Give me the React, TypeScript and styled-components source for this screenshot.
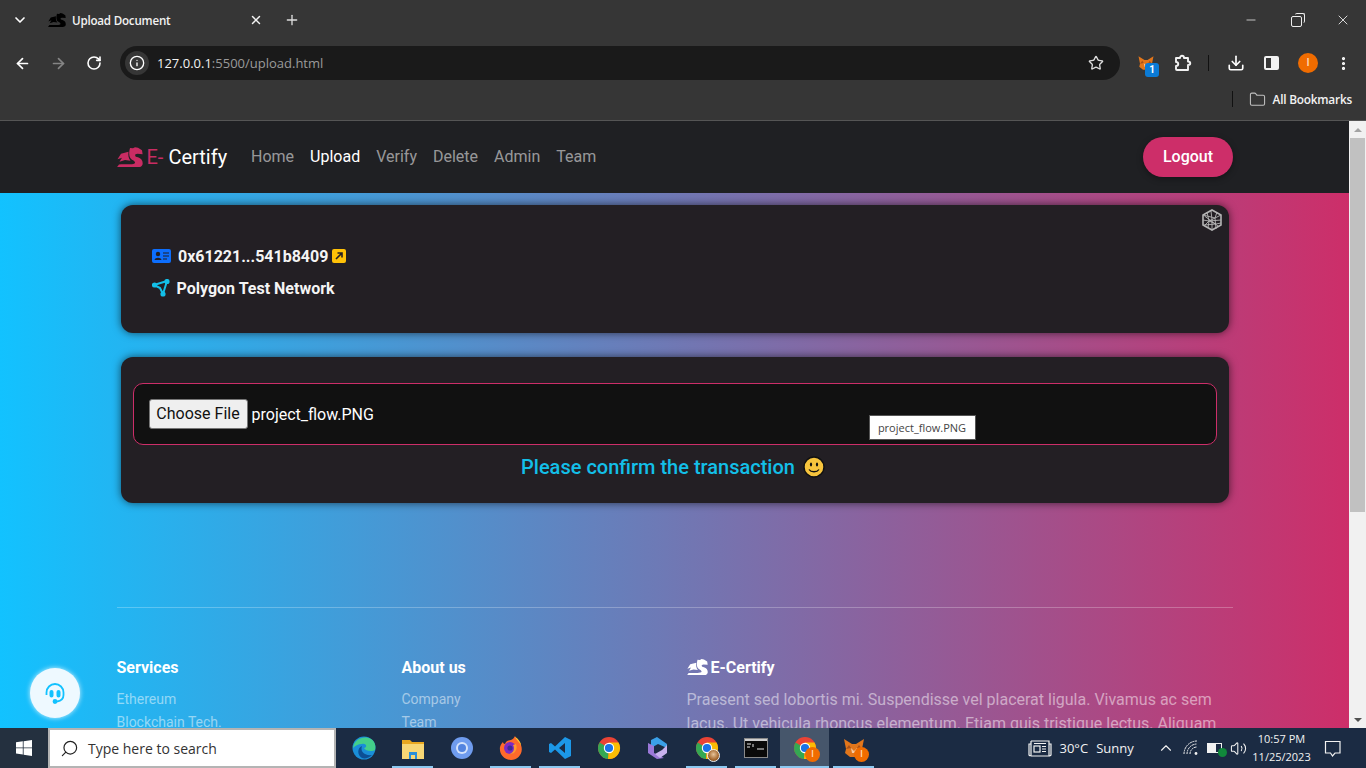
import React from "react";
import styled, { createGlobalStyle } from "styled-components";
import {
  ArrowLeft,
  ArrowRight,
  ChevronDown,
  ChevronUp,
  Download,
  EllipsisVertical,
  Folder,
  Info,
  Minus,
  Plus,
  RotateCw,
  Search,
  Star,
  Volume2,
  X,
} from "lucide-react";

const GlobalStyle = createGlobalStyle`
  html, body {
    margin: 0;
    padding: 0;
    height: 100%;
    overflow: hidden;
    background: #363636;
    font-family: "Roboto", "Liberation Sans", sans-serif;
  }
  * { box-sizing: border-box; }
`;

const Screen = styled.div`
  display: flex;
  flex-direction: column;
  width: 1366px;
  height: 768px;
  overflow: hidden;
  position: relative;
`;

/* browser chrome */
const Chrome = styled.div`
  flex: 0 0 121px;
  display: flex;
  flex-direction: column;
  background: #363636;
  border-bottom: 1px solid #555;
  color: #fff;
  font-family: "Open Sans", "Liberation Sans", sans-serif;
`;

const TabStrip = styled.div`
  flex: 0 0 40px;
  display: flex;
  align-items: center;
  padding-left: 12px;
`;

const TabTitle = styled.div`
  display: flex;
  align-items: center;
  width: 215px;
  margin-left: 20px;
  font-size: 11.6px;
  font-weight: 600;
  letter-spacing: -0.2px;
  gap: 6px;
  color: #f2f2f2;
`;

const TabClose = styled.div`
  margin-left: auto;
  display: flex;
`;

const NewTab = styled.div`
  display: flex;
  margin-left: 21px;
`;

const WindowButtons = styled.div`
  margin-left: auto;
  display: flex;
  align-items: center;
  gap: 33px;
  padding-right: 15px;
`;

const Restore = styled.div`
  position: relative;
  width: 11px;
  height: 11px;
  border: 1px solid #eee;
  border-radius: 2px;
  margin-top: 2px;
  &::before {
    content: "";
    position: absolute;
    top: -4px;
    right: -4px;
    width: 9px;
    height: 9px;
    border-top: 1px solid #eee;
    border-right: 1px solid #eee;
    border-radius: 2px;
  }
`;

const Toolbar = styled.div`
  flex: 0 0 44px;
  display: flex;
  align-items: center;
  padding: 2px 0 0 14px;
`;

const NavIcons = styled.div`
  display: flex;
  align-items: center;
  gap: 19px;
`;

const Omnibox = styled.div`
  width: 1000px;
  height: 34px;
  margin-left: 18px;
  display: flex;
  align-items: center;
  padding: 0 16px 0 5px;
  background: #1a1a1a;
  border-radius: 17px;
  font-size: 13px;
`;

const SiteInfo = styled.div`
  width: 24px;
  height: 24px;
  border-radius: 50%;
  background: #363636;
  display: flex;
  align-items: center;
  justify-content: center;
  margin-right: 8px;
`;

const HostPart = styled.span`
  color: #f2f2f2;
`;

const PathPart = styled.span`
  color: #9a9a9a;
`;

const StarSlot = styled.div`
  margin-left: auto;
  display: flex;
`;

const ExtensionIcons = styled.div`
  display: flex;
  align-items: center;
  margin-left: 17px;
`;

const FoxSlot = styled.div`
  position: relative;
  display: flex;
  width: 22px;
  margin-right: 15px;
`;

const ExtBadge = styled.div`
  position: absolute;
  left: 8px;
  top: 9px;
  width: 14px;
  height: 14px;
  border-radius: 3px;
  background: #0b7bd6;
  color: #fff;
  font: 700 10px/14px "Roboto", sans-serif;
  text-align: center;
`;

const ToolbarDivider = styled.div`
  width: 1px;
  height: 16px;
  background: #111;
  margin: 0 18px 0 16px;
`;

const SidePanelIcon = styled.div`
  width: 15px;
  height: 14px;
  margin: 0 19px 0 19px;
  border: 2px solid #f2f2f2;
  border-radius: 2px;
  background: linear-gradient(to right, transparent 50%, #f2f2f2 50%);
`;

const Avatar = styled.div`
  width: 20px;
  height: 20px;
  border-radius: 50%;
  background: #f06c00;
  color: #ffd9b8;
  font: 500 11px/20px "Roboto", sans-serif;
  text-align: center;
  margin-right: 17px;
`;

const BookmarksBar = styled.div`
  flex: 1;
  display: flex;
  align-items: center;
  justify-content: flex-end;
  padding: 0 14px 6px 0;
  font-size: 11.8px;
  font-weight: 600;
  letter-spacing: -0.2px;
  color: #f2f2f2;
`;

const BookmarksDivider = styled.div`
  width: 1px;
  height: 16px;
  background: #111;
  margin-right: 16px;
`;

const BookmarksFolder = styled.div`
  display: flex;
  margin-right: 7px;
  color: #c0c0c0;
`;

/* page */
const Viewport = styled.div`
  flex: 1;
  display: flex;
  min-height: 0;
`;

const Page = styled.div`
  flex: 1;
  min-width: 0;
  overflow: hidden;
  background: linear-gradient(to right, #12c2ff 0%, #cd2e69 100%);
`;

const NavBar = styled.div`
  height: 72px;
  background: #1f2023;
  padding: 0 116px 0 116.5px;
  display: flex;
  align-items: center;
`;

const Brand = styled.div`
  display: flex;
  align-items: center;
  width: 126.5px;
  font-size: 20px;
  color: #fff;
`;

const BrandAccent = styled.span`
  color: #c92c63;
  margin: 0 5px 0 4px;
`;

const NavLinks = styled.div`
  display: flex;
  gap: 16px;
  margin: 0 0 2px 8px;
`;

const NavLink = styled.span<{ $active?: boolean }>`
  font-size: 16px;
  color: ${(p) => (p.$active ? "#fff" : "rgba(255,255,255,0.55)")};
`;

const LogoutButton = styled.div`
  margin-left: auto;
  width: 90px;
  height: 40px;
  border-radius: 20px;
  background: #cd2e69;
  color: #fff;
  font-size: 16px;
  font-weight: 500;
  line-height: 40px;
  text-align: center;
  box-shadow: 0 2px 6px rgba(0, 0, 0, 0.35);
`;

const Main = styled.div`
  width: 1108px;
  margin: 12px 0 0 120.5px;
  display: flex;
  flex-direction: column;
  gap: 24px;
`;

const Card = styled.div`
  position: relative;
  background: #231f24;
  border-radius: 12px;
  box-shadow: 0 0 8px rgba(0, 0, 0, 0.6);
`;

const WalletCard = styled(Card)`
  height: 128px;
  padding: 39px 31px 0;
  color: #f4f4f4;
  font-size: 16px;
  font-weight: 700;
`;

const WalletRow = styled.div`
  display: flex;
  align-items: center;
  height: 24px;
  margin-bottom: 8px;
`;

const RowIcon = styled.div`
  display: flex;
  width: 26.5px;
`;

const NetworkIcon = styled(RowIcon)`
  width: 25px;
`;

const CubeBadge = styled.div`
  position: absolute;
  top: 4px;
  right: 6px;
  display: flex;
`;

const OpenLink = styled.div`
  display: flex;
  margin-left: 4px;
`;

const UploadCard = styled(Card)`
  height: 146px;
  padding: 26px 12px 0;
`;

const FileField = styled.div`
  position: relative;
  height: 62px;
  display: flex;
  align-items: center;
  padding-left: 15px;
  background: #111;
  border: 1px solid #cd2e69;
  border-radius: 10px;
  color: #fff;
  font-size: 16px;
`;

const ChooseButton = styled.div`
  width: 99px;
  height: 30px;
  margin-right: 4px;
  background: #efefef;
  border: 1px solid #767676;
  border-radius: 3px;
  color: #111;
  line-height: 28px;
  text-align: center;
`;

const FileTip = styled.div`
  position: absolute;
  left: 735px;
  top: 31px;
  width: 107px;
  height: 25px;
  background: #fff;
  border: 1px solid #555;
  color: #444;
  font: 11px/23px "Open Sans", sans-serif;
  text-align: center;
`;

const StatusLine = styled.div`
  display: flex;
  align-items: center;
  justify-content: center;
  gap: 8px;
  height: 44px;
  padding-right: 3px;
  color: #13bfe8;
  font-size: 20px;
  font-weight: 500;
`;

const Footer = styled.div`
  width: 1116px;
  margin: 104px 0 0 116.5px;
  border-top: 1px solid rgba(255, 255, 255, 0.25);
  padding-top: 49px;
  display: grid;
  grid-template-columns: 285px 285px 546px;
`;

const FooterHeading = styled.div`
  display: flex;
  align-items: center;
  gap: 3px;
  height: 20px;
  margin-bottom: 11px;
  color: #fff;
  font-size: 16px;
  font-weight: 700;
`;

const FooterLink = styled.div`
  height: 23px;
  line-height: 23px;
  font-size: 14px;
  color: rgba(255, 255, 255, 0.5);
`;

const FooterText = styled.div`
  font-size: 16px;
  line-height: 24px;
  color: rgba(255, 255, 255, 0.5);
`;

const HelpBubble = styled.div`
  position: absolute;
  left: 30px;
  top: 668px;
  width: 50px;
  height: 50px;
  border-radius: 50%;
  background: #eef9ff;
  box-shadow: 0 0 5px rgba(255, 255, 255, 0.8);
  color: #12c2ff;
  display: flex;
  align-items: center;
  justify-content: center;
`;

const Scrollbar = styled.div`
  flex: 0 0 17px;
  display: flex;
  flex-direction: column;
  background: #f1f1f1;
`;

const ScrollArrow = styled.div<{ $down?: boolean }>`
  flex: 0 0 17px;
  display: flex;
  align-items: center;
  justify-content: center;
  &::before {
    content: "";
    border-left: 4px solid transparent;
    border-right: 4px solid transparent;
    ${(p) => (p.$down ? "border-top: 4px solid #505050;" : "border-bottom: 4px solid #a3a3a3;")}
  }
`;

const ScrollThumb = styled.div`
  height: 374px;
  background: #c1c1c1;
  margin: 0 1px;
`;

const ScrollSpace = styled.div`
  flex: 1;
`;

/* windows taskbar */
const Taskbar = styled.div`
  flex: 0 0 40px;
  display: flex;
  align-items: stretch;
  background: #1b2b43;
  color: #f2f2f2;
  font-family: "Open Sans", "Liberation Sans", sans-serif;
`;

const StartButton = styled.div`
  width: 48px;
  display: flex;
  align-items: center;
  justify-content: center;
  background: #24303f;
`;

const SearchBox = styled.div`
  width: 288px;
  display: flex;
  align-items: center;
  gap: 9px;
  padding-left: 10px;
  background: #fff;
  border: 2px solid #b4b4b4;
  color: #333;
  font-size: 14px;
`;

const SearchGlass = styled.div`
  display: flex;
  color: #222;
  transform: scaleX(-1);
`;

const Tiles = styled.div`
  display: flex;
  margin-left: 3px;
`;

const Tile = styled.div<{ $open?: boolean; $active?: boolean }>`
  position: relative;
  width: 49px;
  display: flex;
  align-items: center;
  justify-content: center;
  background: ${(p) => (p.$active ? "#46566b" : "transparent")};
  &::after {
    content: "";
    position: absolute;
    bottom: 0;
    left: ${(p) => (p.$active ? "0" : "4px")};
    right: ${(p) => (p.$active ? "0" : "4px")};
    height: 2px;
    background: ${(p) => (p.$open ? "#8cc8f0" : "transparent")};
  }
`;

const TileBadge = styled.div`
  position: absolute;
  right: 9px;
  bottom: 6px;
  width: 15px;
  height: 15px;
  border-radius: 50%;
  background: #f06c00;
  color: #ffd9b8;
  font: 500 9px/15px "Roboto", sans-serif;
  text-align: center;
`;

const PetBadge = styled.div`
  position: absolute;
  right: 11px;
  bottom: 6px;
  width: 13px;
  height: 13px;
  border-radius: 50%;
  background: radial-gradient(circle at 50% 40%, #e8c49a 0%, #a5682f 60%, #5a3517 100%);
  border: 1px solid #eee;
`;

const Tray = styled.div`
  margin-left: auto;
  display: flex;
  align-items: center;
  font-size: 13px;
`;

const Weather = styled.div`
  display: flex;
  align-items: center;
  width: 129px;
  gap: 8px;
  white-space: nowrap;
`;

const TrayIcons = styled.div`
  display: flex;
  align-items: center;
  gap: 8px;
`;

const BatteryIcon = styled.div`
  position: relative;
  width: 15px;
  height: 10px;
  border: 1px solid #f2f2f2;
  background: linear-gradient(to right, #f2f2f2 60%, transparent 60%);
  &::after {
    content: "";
    position: absolute;
    right: -6px;
    bottom: -5px;
    width: 9px;
    height: 9px;
    border-radius: 50%;
    background: #11893b;
  }
`;

const Clock = styled.div`
  width: 70px;
  text-align: center;
  font-size: 11px;
  line-height: 18px;
`;

const NotifySlot = styled.div`
  display: flex;
  margin: 0 24px 0 6.5px;
`;

function Dragon({ size = 26, color = "currentColor" }: { size?: number; color?: string }) {
  return (
    <svg width={size} height={size * 0.78} viewBox="0 0 26 20" fill={color}>
      <path d="M13 0.8 L16 1.2 L18 0 L21 0.6 L25 3 L25.6 7 L20.5 6.6 L18.5 7.2 C17.5 9 19 10 21 10 C24 11 25.7 13 25.7 16 C25.7 18.5 24 20 21 20 L0 20 L2 17.3 C8 16.8 15 17.8 17.5 16.3 C19 15 17 13.5 15 12.5 C12 11 11.5 6 13 0.8Z" />
      <path d="M11.5 4.5 L4 6.5 L0.5 12 L5 10.5 L2.5 14.5 L8 12.8 L13.5 13.5 C11.5 11 11 8 11.5 4.5Z" />
    </svg>
  );
}

function Fox({ size = 22 }: { size?: number }) {
  return (
    <svg width={size} height={size} viewBox="0 0 24 24">
      <path d="M2 3 L10 8 H14 L22 3 L20 13 L21 17 L16 21 H8 L3 17 L4 13Z" fill="#e2761b" />
      <path d="M9 12 L12 15 L15 12 L14 17 H10Z" fill="#f6c9a0" />
      <path d="M4 13 L9 12 L7 9Z M20 13 L15 12 L17 9Z" fill="#a8511a" />
    </svg>
  );
}

function ExtensionPiece() {
  return (
    <svg width={18} height={18} viewBox="0 0 18 18" fill="none" stroke="#f2f2f2" strokeWidth="1.9" strokeLinejoin="round">
      <path d="M2 4 H6 C6 1 10 1 10 4 H14 V7.5 C17 7.5 17 11 14 11 V16 H3 C2.5 16 2 15.5 2 15 V12 C5 12 5 8 2 8Z" />
    </svg>
  );
}

function ChromeLogo({ size = 24 }: { size?: number }) {
  return (
    <svg width={size} height={size} viewBox="0 0 24 24">
      <circle cx="12" cy="12" r="11" fill="#ea4335" />
      <path d="M12 12 L2.5 6.5 A11 11 0 0 0 11 23 Z" fill="#34a853" />
      <path d="M12 12 L11 23 A11 11 0 0 0 21.5 6.5 L12 6.5 Z" fill="#fbbc04" />
      <circle cx="12" cy="12" r="5.2" fill="#fff" />
      <circle cx="12" cy="12" r="4.1" fill="#1a73e8" />
    </svg>
  );
}

function EdgeLogo() {
  return (
    <svg width={24} height={24} viewBox="0 0 24 24">
      <circle cx="12" cy="12" r="11.5" fill="#1a8ed8" />
      <path d="M1 12 C2 3 12 -1 19 3 C23 5 24 10 23 14 C20 16 13 15 12 12 C16 11 14 7 10 8 C6 8 3 10 1 12Z" fill="#43cf8a" />
      <path d="M10 22 C5 19 5 12 10 10 C8 15 12 20 20 19 C17 22 13 23 10 22Z" fill="#0c4f95" />
    </svg>
  );
}

function ExplorerLogo() {
  return (
    <svg width={24} height={22} viewBox="0 0 24 22">
      <path d="M1 3 H9 L11 5 H23 V9 H1Z" fill="#e9a820" />
      <rect x="1" y="7" width="22" height="15" fill="#f8d775" />
      <rect x="8" y="15" width="8" height="7" fill="#2a8fd8" />
      <rect x="10" y="18" width="4" height="4" fill="#f8d775" />
    </svg>
  );
}

function ChromiumLogo() {
  return (
    <svg width={22} height={22} viewBox="0 0 22 22">
      <circle cx="11" cy="11" r="11" fill="#6f9cef" />
      <circle cx="11" cy="11" r="6" fill="#d5e3fb" />
      <circle cx="11" cy="11" r="4" fill="#5384e0" />
    </svg>
  );
}

function FirefoxLogo() {
  return (
    <svg width={24} height={24} viewBox="0 0 24 24">
      <path d="M16 0 C17 3 21 5 22 9 C25 17 19 24 12 24 C5 24 0 18 1 11 C2 8 3 7 4 6 C4 7 5 8 6 8 C7 5 10 4 12 4 C14 3 15 2 16 0Z" fill="#ff6a2b" />
      <path d="M16 1 C17 4 21 6 22 10 C22 7 20 3 16 1Z" fill="#ffc92b" />
      <circle cx="11" cy="12" r="6" fill="#7d2bc4" />
      <circle cx="11" cy="12" r="2.6" fill="#3d2a96" />
      <path d="M17 8 C19 13 16 19 10 18 C15 17 16 12 14 9Z" fill="#ff9a2e" />
    </svg>
  );
}

function VsCodeLogo() {
  return (
    <svg width={24} height={24} viewBox="0 0 24 24">
      <path d="M17 1 L23 4 V20 L17 23 L7 13.5 L3 17 L1 16 V8 L3 7 L7 10.5Z M17 7 L11 12 L17 17Z" fill="#1c98e8" fillRule="evenodd" />
    </svg>
  );
}

function CopilotLogo() {
  return (
    <svg width={22} height={24} viewBox="0 0 22 24">
      <path d="M4 4 L10 1 L20 8 V12 L11 8 L4 12Z" fill="#3aa0e8" />
      <path d="M1 7 L7 10 V17 L17 22 L10 23 L1 17Z" fill="#9a78d8" />
      <path d="M20 9 V17 L13 22 L8 18 L15 14Z" fill="#c8b2ee" />
    </svg>
  );
}

function TerminalLogo() {
  return (
    <svg width={24} height={20} viewBox="0 0 24 20">
      <rect x="0.5" y="0.5" width="23" height="19" fill="#0a0a0a" stroke="#8a8a8a" />
      <rect x="1" y="1" width="22" height="2" fill="#d0d0d0" />
      <path d="M3 6 H7 M3 9 H6 M9 6 V9 M13 11 H20" stroke="#e8e8e8" strokeWidth="1" />
    </svg>
  );
}

function PolygonMark() {
  return (
    <svg width={18} height={18} viewBox="0 0 18 18" fill="none" stroke="#13bfe8" strokeWidth="2" strokeLinejoin="round">
      <path d="M2 6 L15 2 L11 15 L8 9Z" />
      <circle cx="2.5" cy="6" r="1.6" fill="#13bfe8" />
      <circle cx="15" cy="2.5" r="1.6" fill="#13bfe8" />
      <circle cx="11" cy="15" r="1.6" fill="#13bfe8" />
    </svg>
  );
}

function IdCard() {
  return (
    <svg width={19} height={14} viewBox="0 0 19 14">
      <rect width="19" height="14" rx="2" fill="#0d6efd" />
      <circle cx="6" cy="5" r="2.2" fill="#231f24" />
      <path d="M2.5 11 C3 8 9 8 9.5 11Z" fill="#231f24" />
      <path d="M11 4 H17 M11 7 H17 M11 10 H15" stroke="#231f24" strokeWidth="1.2" />
    </svg>
  );
}

function OpenArrow() {
  return (
    <svg width={14} height={14} viewBox="0 0 14 14">
      <rect width="14" height="14" rx="2" fill="#ffc107" />
      <path d="M4 10 L10 4 M5.5 4 H10 V8.5" stroke="#231f24" strokeWidth="1.6" fill="none" />
    </svg>
  );
}

function WireCube() {
  return (
    <svg width={22} height={22} viewBox="0 0 22 22" fill="none" stroke="#b5b5b5" strokeWidth="0.9">
      <path d="M11 1 L20 6 V16 L11 21 L2 16 V6Z" strokeWidth="1.6" />
      <path d="M2 6 L14 9 L20 6 M14 9 L15 20 M6 3 L8 12 L7 19 M2 11 L8 12 L20 11 M4 16 L8 12 L15 15 L20 14 M3 16 L15 15 M16 3 L14 9 L8 12 M10 2 L11 10.5 L11 20 M3.5 7 L17 17" />
    </svg>
  );
}

function Smiley() {
  return (
    <svg width={22} height={22} viewBox="0 0 22 22">
      <circle cx="11" cy="11" r="10" fill="#f7c43d" stroke="#111" strokeWidth="1.4" />
      <ellipse cx="8" cy="8.5" rx="1.1" ry="2" fill="#111" />
      <ellipse cx="14" cy="8.5" rx="1.1" ry="2" fill="#111" />
      <path d="M6 13.5 C8 16.5 14 16.5 16 13.5" fill="none" stroke="#111" strokeWidth="1.3" />
    </svg>
  );
}

function Headset() {
  return (
    <svg width={22} height={22} viewBox="0 0 22 22" fill="none" stroke="currentColor" strokeWidth="1.8">
      <path d="M2.5 13 V10.5 A8.5 8.5 0 0 1 19.5 10.5 V13 C19.5 17 16.5 19 13 19.5" />
      <rect x="6.4" y="9" width="2.2" height="5.5" rx="1.1" fill="currentColor" />
      <rect x="13.4" y="9" width="2.2" height="5.5" rx="1.1" fill="currentColor" />
      <circle cx="11" cy="19.5" r="1.5" fill="currentColor" />
    </svg>
  );
}

function WindowsLogo() {
  return (
    <svg width={16} height={16} viewBox="0 0 16 16" fill="#fff">
      <path d="M0 2.3 L6.8 1.3 V7.5 H0Z M7.6 1.2 L16 0 V7.5 H7.6Z M0 8.3 H6.8 V14.6 L0 13.6Z M7.6 8.3 H16 V16 L7.6 14.8Z" />
    </svg>
  );
}

function NewsIcon() {
  return (
    <svg width={24} height={17} viewBox="0 0 24 17" fill="none" stroke="#f2f2f2" strokeWidth="1.2">
      <path d="M3 1 H21 V15 C21 16 22 16 23 15 V4 H21 M3 1 V15 C3 16 2 16 1 15 V4 H3 M3 16 H22" />
      <rect x="6" y="6" width="6" height="6" />
      <path d="M6 3.5 H18 M14 6.5 H18 M14 9 H18 M14 11.5 H18" />
    </svg>
  );
}

function WifiBars() {
  return (
    <svg width={16} height={16} viewBox="0 0 16 16" fill="none" stroke="#f2f2f2" strokeWidth="1">
      <path d="M1 14 A13 13 0 0 1 14 1 M4 14 A10 10 0 0 1 14 4 M7 14 A7 7 0 0 1 14 7" strokeDasharray="2 0.6" />
      <circle cx="13" cy="13.5" r="1.4" fill="#f2f2f2" stroke="none" />
    </svg>
  );
}

function NotifyBubble() {
  return (
    <svg width={19} height={19} viewBox="0 0 19 19" fill="none" stroke="#f2f2f2" strokeWidth="1.2">
      <path d="M2.5 2.5 H17 V14 H12 L9.5 17 L7.5 14 H2.5Z" />
    </svg>
  );
}

const tiles = [
  { key: "edge", icon: <EdgeLogo />, open: false },
  { key: "explorer", icon: <ExplorerLogo />, open: true },
  { key: "chromium", icon: <ChromiumLogo />, open: false },
  { key: "firefox", icon: <FirefoxLogo />, open: true },
  { key: "vscode", icon: <VsCodeLogo />, open: true },
  { key: "chrome", icon: <ChromeLogo />, open: false },
  { key: "copilot", icon: <CopilotLogo />, open: false },
  { key: "chrome2", icon: <ChromeLogo />, open: true, pet: true },
  { key: "terminal", icon: <TerminalLogo />, open: true },
  { key: "chrome3", icon: <ChromeLogo />, open: true, active: true, badge: true },
  { key: "fox", icon: <Fox size={24} />, open: true, badge: true },
];

const navItems = ["Home", "Upload", "Verify", "Delete", "Admin", "Team"];

export default function App() {
  return (
    <Screen>
      <GlobalStyle />
      <Chrome>
        <TabStrip>
          <ChevronDown size={16} strokeWidth={2.5} />
          <TabTitle>
            <Dragon size={18} color="#000" />
            Upload Document
            <TabClose>
              <X size={14} strokeWidth={2.5} />
            </TabClose>
          </TabTitle>
          <NewTab>
            <Plus size={16} strokeWidth={2} color="#ddd" />
          </NewTab>
          <WindowButtons>
            <Minus size={14} strokeWidth={1.2} />
            <Restore />
            <X size={16} strokeWidth={1.2} />
          </WindowButtons>
        </TabStrip>
        <Toolbar>
          <NavIcons>
            <ArrowLeft size={17} strokeWidth={2.4} />
            <ArrowRight size={17} strokeWidth={2.4} color="#858585" />
            <RotateCw size={16} strokeWidth={2.4} />
          </NavIcons>
          <Omnibox>
            <SiteInfo>
              <Info size={16} strokeWidth={2} />
            </SiteInfo>
            <HostPart>127.0.0.1</HostPart>
            <PathPart>:5500/upload.html</PathPart>
            <StarSlot>
              <Star size={16} strokeWidth={2} color="#ddd" />
            </StarSlot>
          </Omnibox>
          <ExtensionIcons>
            <FoxSlot>
              <Fox size={18} />
              <ExtBadge>1</ExtBadge>
            </FoxSlot>
            <ExtensionPiece />
            <ToolbarDivider />
            <Download size={18} strokeWidth={2.2} />
            <SidePanelIcon />
            <Avatar>I</Avatar>
            <EllipsisVertical size={17} strokeWidth={2.5} />
          </ExtensionIcons>
        </Toolbar>
        <BookmarksBar>
          <BookmarksDivider />
          <BookmarksFolder>
            <Folder size={17} strokeWidth={1.5} />
          </BookmarksFolder>
          All Bookmarks
        </BookmarksBar>
      </Chrome>

      <Viewport>
        <Page>
          <NavBar>
            <Brand>
              <Dragon color="#c92c63" />
              <BrandAccent>E-</BrandAccent>
              Certify
            </Brand>
            <NavLinks>
              {navItems.map((item) => (
                <NavLink key={item} $active={item === "Upload"}>
                  {item}
                </NavLink>
              ))}
            </NavLinks>
            <LogoutButton>Logout</LogoutButton>
          </NavBar>

          <Main>
            <WalletCard>
              <CubeBadge>
                <WireCube />
              </CubeBadge>
              <WalletRow>
                <RowIcon>
                  <IdCard />
                </RowIcon>
                0x61221...541b8409
                <OpenLink>
                  <OpenArrow />
                </OpenLink>
              </WalletRow>
              <WalletRow>
                <NetworkIcon>
                  <PolygonMark />
                </NetworkIcon>
                Polygon Test Network
              </WalletRow>
            </WalletCard>

            <UploadCard>
              <FileField>
                <ChooseButton>Choose File</ChooseButton>
                project_flow.PNG
                <FileTip>project_flow.PNG</FileTip>
              </FileField>
              <StatusLine>
                Please confirm the transaction
                <Smiley />
              </StatusLine>
            </UploadCard>
          </Main>

          <Footer>
            <div>
              <FooterHeading>Services</FooterHeading>
              <FooterLink>Ethereum</FooterLink>
              <FooterLink>Blockchain Tech.</FooterLink>
            </div>
            <div>
              <FooterHeading>About us</FooterHeading>
              <FooterLink>Company</FooterLink>
              <FooterLink>Team</FooterLink>
            </div>
            <div>
              <FooterHeading>
                <Dragon size={21} color="#fff" />
                E-Certify
              </FooterHeading>
              <FooterText>
                Praesent sed lobortis mi. Suspendisse vel placerat ligula. Vivamus ac sem lacus. Ut vehicula rhoncus
                elementum. Etiam quis tristique lectus. Aliquam
              </FooterText>
            </div>
          </Footer>
        </Page>
        <Scrollbar>
          <ScrollArrow />
          <ScrollThumb />
          <ScrollSpace />
          <ScrollArrow $down />
        </Scrollbar>
      </Viewport>

      <HelpBubble>
        <Headset />
      </HelpBubble>

      <Taskbar>
        <StartButton>
          <WindowsLogo />
        </StartButton>
        <SearchBox>
          <SearchGlass>
            <Search size={19} strokeWidth={1.5} />
          </SearchGlass>
          Type here to search
        </SearchBox>
        <Tiles>
          {tiles.map((t) => (
            <Tile key={t.key} $open={t.open} $active={t.active}>
              {t.icon}
              {t.badge && <TileBadge>I</TileBadge>}
              {t.pet && <PetBadge />}
            </Tile>
          ))}
        </Tiles>
        <Tray>
          <Weather>
            <NewsIcon />
            <span>30°C</span>
            <span>Sunny</span>
          </Weather>
          <TrayIcons>
            <ChevronUp size={18} strokeWidth={1.5} />
            <WifiBars />
            <BatteryIcon />
            <Volume2 size={17} strokeWidth={1.5} />
          </TrayIcons>
          <Clock>
            <div>10:57 PM</div>
            <div>11/25/2023</div>
          </Clock>
          <NotifySlot>
            <NotifyBubble />
          </NotifySlot>
        </Tray>
      </Taskbar>
    </Screen>
  );
}
